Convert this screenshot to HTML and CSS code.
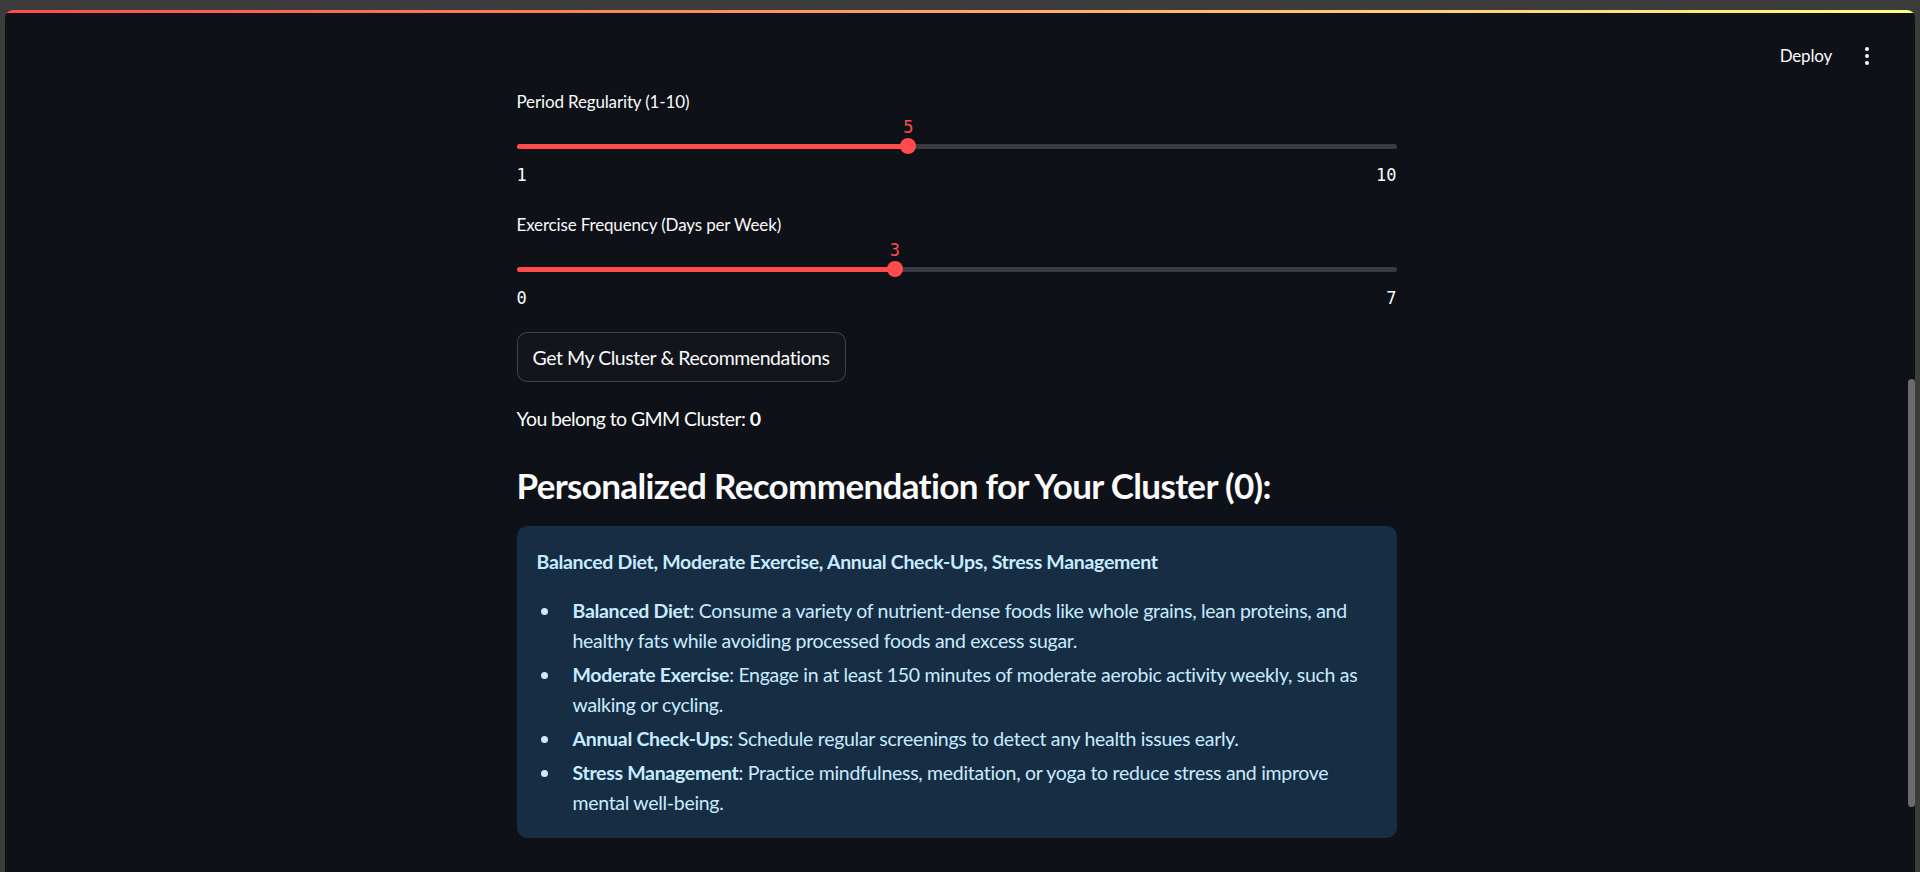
FILE: index.html
```html
<!DOCTYPE html>
<html lang="en">
<head>
<meta charset="utf-8">
<title>GMM Cluster Recommendations</title>
<link rel="stylesheet" href="styles.css">
</head>
<body>
<div class="panel">
  <div class="decor"></div>
  <div class="body">
    <div class="main">
      <header class="header">
        <span class="deploy">Deploy</span>
        <span class="menu"><i></i><i></i><i></i></span>
      </header>
      <section class="content">
        <div class="slider">
          <div class="slider-label">Period Regularity (1-10)</div>
          <div class="slider-body" style="--f: 0.4444">
            <div class="value-row"><span class="value">5</span></div>
            <div class="track-row">
              <div class="track"><div class="fill"></div></div>
              <div class="thumb"></div>
            </div>
          </div>
          <div class="ticks"><span>1</span><span>10</span></div>
        </div>
        <div class="slider">
          <div class="slider-label">Exercise Frequency (Days per Week)</div>
          <div class="slider-body" style="--f: 0.4286">
            <div class="value-row"><span class="value">3</span></div>
            <div class="track-row">
              <div class="track"><div class="fill"></div></div>
              <div class="thumb"></div>
            </div>
          </div>
          <div class="ticks"><span>0</span><span>7</span></div>
        </div>
        <button class="btn">Get My Cluster &amp; Recommendations</button>
        <p class="result">You belong to GMM Cluster: <strong>0</strong></p>
        <h3 class="heading">Personalized Recommendation for Your Cluster (0):</h3>
        <div class="info">
          <p class="info-title">Balanced Diet, Moderate Exercise, Annual Check-Ups, Stress Management</p>
          <ul class="info-list">
            <li><span class="dot"></span><span class="li-text"><strong>Balanced Diet</strong>: Consume a variety of nutrient-dense foods like whole grains, lean proteins, and healthy fats while avoiding processed foods and excess sugar.</span></li>
            <li><span class="dot"></span><span class="li-text"><strong>Moderate Exercise</strong>: Engage in at least 150 minutes of moderate aerobic activity weekly, such as walking or cycling.</span></li>
            <li><span class="dot"></span><span class="li-text"><strong>Annual Check-Ups</strong>: Schedule regular screenings to detect any health issues early.</span></li>
            <li><span class="dot"></span><span class="li-text"><strong>Stress Management</strong>: Practice mindfulness, meditation, or yoga to reduce stress and improve mental well-being.</span></li>
          </ul>
        </div>
      </section>
    </div>
    <div class="scroll"><div class="scroll-thumb"></div></div>
  </div>
</div>
</body>
</html>
```
FILE: styles.css
```css
* { box-sizing: border-box; }

html, body {
  margin: 0;
  height: 100%;
}

body {
  background: #3c3c3c;
  padding: 10px 5px 0 5px;
  font-family: "Lato", "Noto Sans", sans-serif;
  color: #fafafa;
  overflow: hidden;
}

.panel {
  height: 862px;
  background: #0e1117;
  border-radius: 8px 8px 0 0;
  overflow: hidden;
  display: flex;
  flex-direction: column;
}

.decor {
  height: 3px;
  flex: none;
  background: linear-gradient(90deg, #ff4b4b, #fffd80);
}

.body {
  flex: 1;
  display: flex;
}

.main {
  flex: 1;
  display: flex;
  flex-direction: column;
}

.scroll {
  width: 7px;
  flex: none;
}

.scroll-thumb {
  margin-top: 366px;
  height: 428px;
  border-radius: 4px;
  background: #6a6a6f;
}

.header {
  height: 78px;
  padding: 30px 39px 0 0;
  display: flex;
  justify-content: flex-end;
  align-items: flex-start;
  gap: 33px;
}

.deploy {
  font-size: 17px;
  letter-spacing: -0.2px;
  line-height: 26px;
  color: #fafafa;
}

.menu {
  display: flex;
  flex-direction: column;
  gap: 3px;
  padding-top: 4px;
}

.menu i {
  display: block;
  width: 4px;
  height: 4px;
  border-radius: 50%;
  background: #fafafa;
}

.content {
  width: 880px;
  margin: 0 auto;
  display: flex;
  flex-direction: column;
}

.slider {
  display: flex;
  flex-direction: column;
  margin-bottom: 28px;
}

.slider + .slider { margin-bottom: 23px; }

.slider-label {
  font-size: 17px;
  letter-spacing: -0.15px;
  line-height: 22px;
  margin-bottom: 3px;
}

.slider-body {
  position: relative;
}

.value-row {
  position: relative;
  height: 22px;
}

.value {
  position: absolute;
  top: 0;
  left: calc((100% - 16px) * var(--f) + 8px);
  transform: translateX(-50%);
  font-family: "DejaVu Sans Mono", "Liberation Mono", monospace;
  font-size: 17px;
  line-height: 22px;
  color: #ff4b4b;
}

.track-row {
  position: relative;
  height: 16px;
  display: flex;
  align-items: center;
}

.track {
  flex: 1;
  height: 5px;
  border-radius: 3px;
  background: #383b43;
  overflow: hidden;
}

.fill {
  height: 100%;
  width: calc((100% - 16px) * var(--f) + 8px);
  background: #ff4b4b;
}

.thumb {
  position: absolute;
  top: 0;
  left: calc((100% - 16px) * var(--f));
  width: 16px;
  height: 16px;
  border-radius: 50%;
  background: #ff4b4b;
}

.ticks {
  margin-top: 11px;
  height: 21px;
  display: flex;
  justify-content: space-between;
  font-family: "DejaVu Sans Mono", "Liberation Mono", monospace;
  font-size: 17px;
  line-height: 21px;
  color: #fafafa;
}

.btn {
  align-self: flex-start;
  height: 50px;
  padding: 0 16px 0 15px;
  border: 1px solid rgba(250, 250, 250, 0.2);
  border-radius: 10px;
  background: #12151c;
  color: #fafafa;
  font-family: inherit;
  font-size: 19.5px;
  letter-spacing: -0.45px;
}

.result {
  margin: 22px 0 0 0;
  font-size: 19.5px;
  letter-spacing: -0.6px;
  line-height: 30px;
}

.result strong { font-weight: 700; }

.heading {
  margin: 29px 0 0 0;
  font-size: 35px;
  letter-spacing: -0.65px;
  line-height: 44px;
  font-weight: 700;
}

.info {
  margin-top: 19px;
  background: #172d43;
  border-radius: 10px;
  padding: 20px 20px 20px 20px;
  color: #c7ebff;
  font-size: 19.5px;
  letter-spacing: -0.3px;
}

.info-title {
  margin: 0;
  font-weight: 700;
  line-height: 32px;
}

.info-list {
  margin: 18px 0 0 0;
  padding: 0;
  list-style: none;
}

.info-list li {
  display: flex;
  align-items: flex-start;
  line-height: 30px;
}

.info-list li + li { margin-top: 4px; }

.dot {
  flex: none;
  width: 7px;
  height: 7px;
  margin: 12px 25px 0 4px;
  border-radius: 50%;
  background: currentColor;
}

.li-text {
  flex: 1;
  min-width: 0;
}

.info-list strong { font-weight: 700; }
```
